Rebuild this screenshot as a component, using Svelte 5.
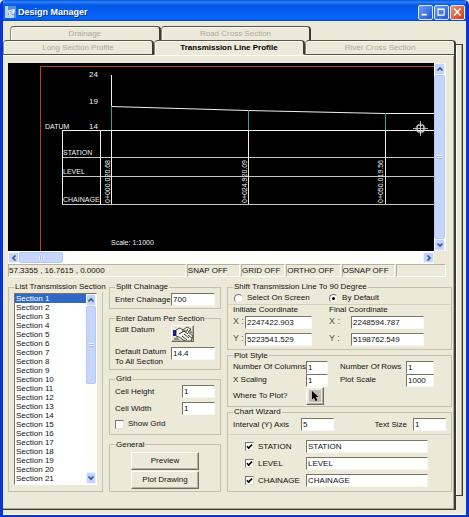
<script lang="ts">
  const backTabs = ['Drainage', 'Road Cross Section'];
  const frontTabs = ['Long Section Profile', 'Transmission Line Profile', 'River Cross Section'];
  const modes = ['SNAP OFF', 'GRID OFF', 'ORTHO OFF', 'OSNAP OFF', ''];
  const sections = Array.from({ length: 21 }, (_, i) => `Section ${i + 1}`);

  const stations = [
    { x: 103, top: 43, label: '0+000.020.68', labelX: 102 },
    { x: 240, top: 47, label: '0+024.920.09', labelX: 239 },
    { x: 377, top: 50, label: '0+050.019.56', labelX: 375 }
  ];

  let activeTab = $state('Transmission Line Profile');
  let section = $state('Section 1');
  let splitChainage = $state('700');
  let defaultDatum = $state('14.4');
  let cellHeight = $state('1');
  let cellWidth = $state('1');
  let showGrid = $state(false);
  let shiftMode = $state('default');
  let initial = $state({ x: '2247422.903', y: '5223541.529' });
  let final = $state({ x: '2248594.787', y: '5198762.549' });
  let columns = $state('1');
  let rows = $state('1');
  let xScaling = $state('1');
  let plotScale = $state('1000');
  let interval = $state('5');
  let textSize = $state('1');
  let chartRows = $state([
    { name: 'STATION', value: 'STATION', checked: true },
    { name: 'LEVEL', value: 'LEVEL', checked: true },
    { name: 'CHAINAGE', value: 'CHAINAGE', checked: true }
  ]);
</script>

{#snippet arrow(dir: string)}
  <button type="button" class="arrow" aria-label="Scroll {dir}">
    <svg class={dir} viewBox="0 0 8 8" width="8" height="8">
      <path d="M1.5 5.5 4 3l2.5 2.5" fill="none" stroke="#3d5688" stroke-width="1.7" />
    </svg>
  </button>
{/snippet}

<div class="window">
  <header class="titlebar">
    <svg class="app-icon" viewBox="0 0 11 12" width="11" height="12">
      <rect width="11" height="12" fill="#4d95d8" />
      <path d="M0 0h3v12H0zM0 9h9v3H0z" fill="#b9d8ee" />
      <path d="M3 4.5 9 3l1 1-1 4-5 1z" fill="#eef0f2" />
      <path d="M4 6l4-1.500M5 7.500l3-.8" stroke="#8c98a6" stroke-width=".8" />
    </svg>
    <h1>Design Manager</h1>
    <div class="caption-buttons">
      <button type="button" aria-label="Minimize">
        <svg viewBox="0 0 15 14"><path d="M3 10h6" stroke="#fff" stroke-width="2.200" /></svg>
      </button>
      <button type="button" aria-label="Maximize">
        <svg viewBox="0 0 15 14"><path d="M3.500 3.500h7v7h-7zM3 4h8" fill="none" stroke="#fff" stroke-width="1.300" /></svg>
      </button>
      <button type="button" class="close" aria-label="Close">
        <svg viewBox="0 0 15 14"><path d="M3.500 3l7.500 8M11 3l-7.500 8" stroke="#fff" stroke-width="1.700" /></svg>
      </button>
    </div>
  </header>

  <main class="client">
    <div class="tabs back-tabs">
      {#each backTabs as tab}
        <button type="button" class="tab" onclick={() => (activeTab = tab)}>{tab}</button>
      {/each}
    </div>

    <div class="pages">
      <div class="front">
        <div class="tabs">
          {#each frontTabs as tab}
            <button type="button" class="tab" class:active={tab === activeTab} onclick={() => (activeTab = tab)}>
              {tab}
            </button>
          {/each}
        </div>

        <div class="sheet">
          <div class="viewer">
            <svg class="drawing">
              <g class="frame">
                <line x1="32.5" y1="3.5" x2="2000" y2="3.5" />
                <line x1="32.5" y1="3" x2="32.5" y2="188" />
              </g>
              <g class="wire">
                <line x1="103.5" y1="12" x2="103.5" y2="44" />
                <polyline points="103,43.500 240,47.500 377,50.500 430,50.500" />
                <line x1="54" y1="67.5" x2="2000" y2="67.5" />
                <line class="dim" x1="54" y1="94.5" x2="2000" y2="94.5" />
                <line class="dim" x1="54" y1="113.5" x2="2000" y2="113.5" />
                <line class="dim" x1="54" y1="141.5" x2="2000" y2="141.5" />
                <line x1="54.5" y1="67" x2="54.5" y2="141" />
                <line x1="92.5" y1="67" x2="92.5" y2="141" />
              </g>
              {#each stations as s}
                <line class="level" x1={s.x + 0.5} y1={s.top} x2={s.x + 0.5} y2="67" />
                <line class="post" x1={s.x + 0.5} y1="67" x2={s.x + 0.5} y2="141" />
                <text transform="translate({s.labelX} 140) rotate(-90)">{s.label}</text>
              {/each}
              <text x="81" y="14" class="axis">24</text>
              <text x="81" y="41" class="axis">19</text>
              <text x="81" y="66" class="axis">14</text>
              <text x="37" y="66">DATUM</text>
              <text x="55" y="92">STATION</text>
              <text x="55" y="111">LEVEL</text>
              <text x="55" y="139">CHAINAGE</text>
              <text x="103" y="182">Scale: 1:1000</text>
              <g class="cursor">
                <path d="M405 65.500h15M412.500 58v15" />
                <path d="M409.500 62.500h6v6h-6z" />
                <circle cx="412.5" cy="65.5" r="4.5" />
              </g>
            </svg>
            <div class="vscroll">
              {@render arrow('up')}
              <div class="thumb"><i class="grip"></i></div>
              {@render arrow('down')}
            </div>
            <div class="hscroll">
              {@render arrow('left')}
              <div class="thumb"><i class="grip"></i></div>
              {@render arrow('right')}
            </div>
          </div>

          <div class="status">
            <span>57.3355 , 16.7615 , 0.0000</span>
            {#each modes as mode}
              <span>{mode}</span>
            {/each}
          </div>

          <form class="panels" onsubmit={(e) => e.preventDefault()}>
            <div class="column">
              <fieldset class="list-group">
                <legend><label for="sections">List Transmission Section</label></legend>
                <div class="listbox">
                  <select id="sections" size="21" bind:value={section}>
                    {#each sections as name}
                      <option value={name}>{name}</option>
                    {/each}
                  </select>
                  <div class="vscroll">
                    {@render arrow('up')}
                    <div class="thumb"><i class="grip"></i></div>
                    {@render arrow('down')}
                  </div>
                </div>
              </fieldset>
            </div>

            <div class="column">
              <fieldset>
                <legend>Split Chainage</legend>
                <div class="row">
                  <label for="split">Enter Chainage</label>
                  <input id="split" type="text" class="medium" bind:value={splitChainage} />
                </div>
              </fieldset>

              <fieldset>
                <legend>Enter Datum Per Section</legend>
                <div class="row datum-row">
                  <label for="edit-datum">Edit Datum</label>
                  <button type="button" id="edit-datum" class="raised edit">
                    <svg viewBox="0 0 22 16" width="22" height="16">
                      <path d="M1 4h3v6H1z" fill="#1c1c9c" />
                      <path d="M4 4l4-2 3 2 4-3 4 2-3 3 5 4-2 5h-6L7 11l-3-1z" fill="#f6f5e8" stroke="#222" stroke-width=".8" />
                      <path d="M10 5h5l1-2M7 8l5-3 4 3M12 8l5 4M10 10l5 4M16 9l4 3" fill="none" stroke="#222" stroke-width=".9" />
                      <path d="M2 12l3-1 3 3H2zM16 6l3-2 2 4z" fill="#8f8e82" />
                    </svg>
                  </button>
                </div>
                <div class="row default-row">
                  <label for="default-datum">Default Datum<br />To All Section</label>
                  <input id="default-datum" type="text" class="medium" bind:value={defaultDatum} />
                </div>
              </fieldset>

              <fieldset class="grid-group">
                <legend>Grid</legend>
                <div class="row">
                  <label for="cell-height">Cell Height</label>
                  <input id="cell-height" type="text" class="small" bind:value={cellHeight} />
                </div>
                <div class="row">
                  <label for="cell-width">Cell Width</label>
                  <input id="cell-width" type="text" class="small" bind:value={cellWidth} />
                </div>
                <label class="check"><input type="checkbox" bind:checked={showGrid} />Show Grid</label>
              </fieldset>

              <fieldset class="general">
                <legend>General</legend>
                <button type="button" class="raised">Preview</button>
                <button type="button" class="raised">Plot Drawing</button>
              </fieldset>
            </div>

            <div class="column">
              <fieldset class="shift">
                <legend>Shift Transmission Line To 90 Degree</legend>
                <div class="radios">
                  <label class="check"><input type="radio" name="shift" value="screen" bind:group={shiftMode} />Select On Screen</label>
                  <label class="check"><input type="radio" name="shift" value="default" bind:group={shiftMode} />By Default</label>
                </div>
                <hr />
                <div class="coords">
                  <div class="coord">
                    <p>Initiate Coordinate</p>
                    <div class="pair"><label for="ix">X :</label><input id="ix" type="text" bind:value={initial.x} /></div>
                    <div class="pair"><label for="iy">Y :</label><input id="iy" type="text" bind:value={initial.y} /></div>
                  </div>
                  <div class="coord final">
                    <p>Final Coordinate</p>
                    <div class="pair"><label for="fx">X :</label><input id="fx" type="text" bind:value={final.x} /></div>
                    <div class="pair"><label for="fy">Y :</label><input id="fy" type="text" bind:value={final.y} /></div>
                  </div>
                </div>
              </fieldset>

              <fieldset class="plot">
                <legend>Plot Style</legend>
                <label for="columns">Number Of Columns</label>
                <input id="columns" type="text" bind:value={columns} />
                <label for="rows">Number Of Rows</label>
                <input id="rows" type="text" bind:value={rows} />
                <label for="x-scaling">X Scaling</label>
                <input id="x-scaling" type="text" bind:value={xScaling} />
                <label for="plot-scale">Plot Scale</label>
                <input id="plot-scale" type="text" bind:value={plotScale} />
                <label for="where">Where To Plot?</label>
                <button type="button" id="where" class="raised pick">
                  <svg viewBox="0 0 12 12" width="12" height="12">
                    <rect width="12" height="12" fill="#bdbdbd" />
                    <path d="M3 1v8.500l2-1.800 1.500 3.300 1.800-.8L6.800 7H9.500z" fill="#000" />
                  </svg>
                </button>
              </fieldset>

              <fieldset class="chart">
                <legend>Chart Wizard</legend>
                <div class="row">
                  <label for="interval">Interval (Y) Axis</label>
                  <input id="interval" type="text" class="small" bind:value={interval} />
                  <label class="text-size" for="text-size">Text Size</label>
                  <input id="text-size" type="text" class="small" bind:value={textSize} />
                </div>
                <hr />
                <div class="chart-rows">
                  {#each chartRows as row}
                    <div class="chart-row">
                      <label class="check"><input type="checkbox" bind:checked={row.checked} />{row.name}</label>
                      <input type="text" aria-label="{row.name} title" bind:value={row.value} />
                    </div>
                  {/each}
                </div>
              </fieldset>
            </div>
          </form>
        </div>
      </div>
      <div class="back-sheet"></div>
    </div>
  </main>
</div>

<style>
  :global(body) {
    background: #e4e8f0;
  }

  .window {
    box-sizing: border-box;
    border: 3px solid #0636d6;
    border-top: 0;
    border-radius: 5px 5px 0 0;
    overflow: hidden;
    background: #ece9d8;
    color: #111;
    font: 8px/10px 'Liberation Sans', Arial, sans-serif;
  }

  button,
  input,
  select {
    box-sizing: border-box;
    margin: 0;
    padding: 0;
    font: inherit;
    color: inherit;
  }

  svg {
    display: block;
  }

  .titlebar {
    display: flex;
    align-items: center;
    gap: 2px;
    height: 21px;
    padding: 3px 1px 0 2px;
    box-sizing: border-box;
    background: linear-gradient(#0a50d8, #2c84fa 2px, #0458e4 5px, #0560f4 14px, #0668ff 18px, #0348c8);
  }

  h1 {
    flex: 1;
    margin: 0;
    font-size: 9px;
    font-weight: bold;
    color: white;
    text-shadow: 1px 1px #0a2f88;
  }

  .caption-buttons {
    display: flex;
    gap: 1px;
  }

  .caption-buttons button {
    width: 15px;
    height: 15px;
    border: 1px solid #dfe8fb;
    border-radius: 2px;
    background: linear-gradient(135deg, #6d9cf4, #1f56d8);
  }

  .caption-buttons .close {
    background: linear-gradient(135deg, #ee8f70, #cf3d16);
  }

  .client {
    padding: 5px 0 4px;
    border-bottom: 1px solid #fff;
  }

  .tabs {
    display: grid;
    grid-template-columns: repeat(3, 1fr);
  }

  .back-tabs {
    margin: 0 4px 0 7px;
  }

  .tab {
    height: 15px;
    border: 1px solid #55544a;
    border-right: 2px solid #3c3b33;
    border-left-color: #8c8a7c;
    border-radius: 4px 4px 0 0;
    background: #ece9d8;
    box-shadow: inset 1px 1px #fbfaf3;
    color: #aca899;
  }

  .back-tabs .tab {
    height: 14px;
    border-bottom: 0;
  }

  .tab.active {
    border-bottom-color: #ece9d8;
    font-weight: bold;
    color: #000;
  }

  .pages {
    display: flex;
  }

  .front {
    flex: 1;
    min-width: 0;
  }

  .back-sheet {
    width: 6px;
    margin: 4px 3px 14px 0;
    border: solid #3c3b33;
    border-width: 1px 1px 1px 0;
    box-shadow: inset -1px 0 #aca899, inset 1px 1px #fff;
  }

  .sheet {
    padding: 8px 2px 17px 5px;
    border-right: 2px solid #3c3b33;
    border-bottom: 1px solid #3c3b33;
    box-shadow: inset 0 1px #fff, inset -1px -1px #aca899;
  }

  .viewer {
    display: grid;
    grid-template-columns: 1fr 12px;
    margin-right: 6px;
  }

  .drawing {
    width: 100%;
    height: 188px;
    overflow: hidden;
    background: #000;
  }

  .drawing text {
    fill: #f2f2f2;
    font-size: 7px;
  }

  .drawing .axis {
    font-size: 8px;
  }

  .frame line {
    stroke: #b8401c;
  }

  .wire line,
  .wire polyline,
  .post {
    fill: none;
    stroke: #f0f0f0;
  }

  .wire .dim {
    stroke: #c4c4c4;
  }

  .level {
    stroke: #2fa39a;
  }

  .cursor {
    fill: none;
    stroke: #d8d8d8;
    stroke-width: 0.8;
  }

  .vscroll,
  .hscroll {
    display: flex;
    background: #fdfdfa;
  }

  .vscroll {
    flex-direction: column;
  }

  .hscroll {
    height: 13px;
    padding: 1px 0;
    box-sizing: border-box;
  }

  .arrow {
    display: grid;
    place-items: center;
    flex: none;
    width: 11px;
    height: 12px;
    border: 1px solid #eef3ff;
    border-radius: 2px;
    background: #c3d3fb;
  }

  .hscroll .arrow {
    height: 11px;
  }

  .arrow .down {
    transform: rotate(180deg);
  }

  .arrow .left {
    transform: rotate(-90deg);
  }

  .arrow .right {
    transform: rotate(90deg);
  }

  .thumb {
    display: grid;
    place-items: center;
    box-sizing: border-box;
    border: 1px solid #b4c8f6;
    border-radius: 2px;
    background: #c6d6fd;
  }

  .viewer .vscroll .thumb {
    flex: 1;
    width: 11px;
  }

  .hscroll .thumb {
    width: 44px;
    margin-right: auto;
  }

  .grip {
    width: 5px;
    height: 4px;
    background: repeating-linear-gradient(#eef4ff 0 1px, #a5bdf0 1px 2px);
  }

  .hscroll .grip {
    background: repeating-linear-gradient(90deg, #eef4ff 0 1px, #a5bdf0 1px 2px);
  }

  .status {
    display: grid;
    grid-template-columns: 177fr 53fr 44fr 54fr 53fr 50fr;
    gap: 1px;
    margin-right: 6px;
  }

  .status span {
    height: 11px;
    border: 1px solid;
    border-color: #b5b2a2 #fff #fff #b5b2a2;
    line-height: 12px;
    white-space: nowrap;
  }

  .panels {
    display: grid;
    grid-template-columns: 95fr 112fr 225fr;
    gap: 6px;
    margin-top: 5px;
  }

  .column {
    display: flex;
    flex-direction: column;
    justify-content: space-between;
    min-width: 0;
  }

  fieldset {
    min-width: 0;
    margin: 0;
    padding: 1px 5px 2px;
    border: 1px solid #c3c0b0;
    box-sizing: border-box;
  }

  legend {
    padding: 0 1px;
    white-space: nowrap;
  }

  label,
  p {
    margin: 0;
    white-space: nowrap;
  }

  input[type='text'] {
    height: 13px;
    min-width: 0;
    padding: 0 1px;
    border: 1px solid;
    border-color: #77756a #f8f7f0 #f8f7f0 #77756a;
    border-radius: 0;
    background: #fff;
    line-height: 11px;
  }

  input[type='checkbox'],
  input[type='radio'] {
    appearance: none;
    display: grid;
    place-items: center;
    width: 9px;
    height: 9px;
    border: 1px solid;
    border-color: #77756a #e4e1d0 #e4e1d0 #77756a;
    background: #fff;
  }

  input[type='radio'] {
    border-radius: 50%;
  }

  input[type='radio']:checked::before {
    content: '';
    width: 3px;
    height: 3px;
    border-radius: 50%;
    background: #000;
  }

  input[type='checkbox']:checked::before {
    content: '';
    width: 5px;
    height: 2px;
    margin-bottom: 2px;
    border: solid #000;
    border-width: 0 0 2px 2px;
    box-sizing: content-box;
    transform: rotate(-45deg) scale(0.8);
  }

  hr {
    margin: 0 -5px;
    border: 0;
    border-top: 1px solid #d3d0c0;
  }

  .row {
    display: flex;
    align-items: center;
    justify-content: space-between;
  }

  .check {
    display: flex;
    align-items: center;
    gap: 4px;
  }

  .medium {
    width: 44px;
  }

  .small {
    width: 33px;
  }

  .raised {
    border: 1px solid;
    border-color: #fff #6f6d62 #6f6d62 #fff;
    background: #ece9d8;
    box-shadow: inset -1px -1px #b5b2a2;
  }

  .list-group {
    padding: 1px 5px 6px;
  }

  .listbox {
    display: flex;
    border: 1px solid;
    border-color: #77756a #fff #fff #77756a;
    background: #fff;
  }

  select {
    flex: 1;
    min-width: 0;
    height: 190px;
    border: 0;
    border-radius: 0;
    outline: 0;
    background: #fff;
    overflow: hidden;
  }

  option {
    height: 9px;
    min-height: 9px;
    padding: 0 1px;
    line-height: 9px;
    color: #111;
  }

  option:checked {
    background: #316ac5 linear-gradient(#316ac5, #316ac5);
    color: #fff;
  }

  .listbox .thumb {
    height: 78px;
    width: 10px;
    margin-bottom: auto;
  }

  .listbox .arrow {
    width: 10px;
  }

  .datum-row {
    align-items: flex-start;
    margin-bottom: 5px;
  }

  .edit {
    width: 23px;
    height: 17px;
    margin-right: 21px;
    overflow: hidden;
  }

  .default-row {
    align-items: flex-start;
  }

  .grid-group {
    padding-bottom: 5px;
  }

  .grid-group .row {
    margin-bottom: 4px;
  }

  .general {
    display: flex;
    flex-direction: column;
    align-items: center;
    gap: 1px;
    padding: 2px 5px;
  }

  .general .raised {
    width: 68px;
    height: 18px;
  }

  .shift {
    padding: 0 5px 3px;
  }

  .radios {
    display: grid;
    grid-template-columns: 96fr 118fr;
    height: 12px;
    padding-left: 1px;
  }

  .coords {
    display: flex;
    gap: 17px;
  }

  .coord {
    display: flex;
    flex-direction: column;
    gap: 4px;
    width: 79px;
  }

  .coord p {
    margin-bottom: -3px;
  }

  .final {
    width: 95px;
  }

  .pair {
    display: flex;
    justify-content: space-between;
  }

  .pair label {
    font-size: 9px;
    color: #55544a;
  }

  .pair input {
    width: 67px;
  }

  .final .pair input {
    width: 73px;
  }

  .plot {
    display: grid;
    grid-template-columns: 73px 22px 78px 28px;
    align-items: center;
    padding: 0 5px 1px;
  }

  .plot label[for='rows'],
  .plot label[for='plot-scale'] {
    padding-left: 12px;
  }

  .plot input {
    width: 100%;
  }

  .pick {
    display: grid;
    place-items: center;
    width: 18px;
    height: 18px;
  }

  .chart .row {
    justify-content: flex-start;
    padding-bottom: 3px;
  }

  .chart .row label {
    width: 68px;
  }

  .chart .row .text-size {
    width: auto;
    margin: 0 6px 0 auto;
  }

  .chart-rows {
    display: grid;
    gap: 4px;
    padding: 5px 18px 2px 12px;
  }

  .chart-row {
    display: grid;
    grid-template-columns: 61px 1fr;
  }
</style>
